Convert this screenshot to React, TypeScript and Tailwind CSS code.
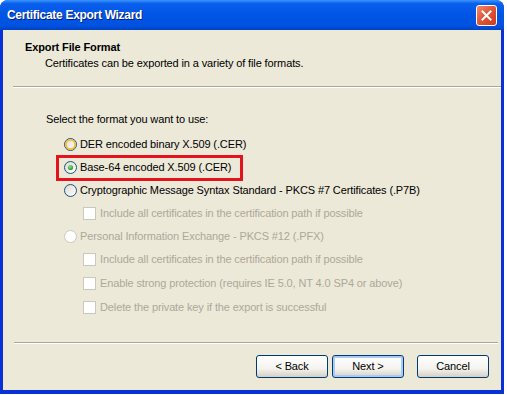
import React from "react";

const font = "font-['Tahoma','Liberation_Sans',sans-serif]";

const Radio: React.FC<{ checked?: boolean; hover?: boolean; disabled?: boolean }> = ({
  checked,
  hover,
  disabled,
}) => {
  const ring = disabled ? "#CAC8BB" : "#1C5180";
  return (
    <svg width="13" height="13" viewBox="0 0 13 13" className="shrink-0">
      <defs>
        <linearGradient id="rf" x1="0" y1="0" x2="1" y2="1">
          <stop offset="0" stopColor="#DCD9CF" />
          <stop offset="1" stopColor="#FFFFFF" />
        </linearGradient>
        <radialGradient id="dot" cx="0.4" cy="0.35" r="0.7">
          <stop offset="0" stopColor="#8EE08E" />
          <stop offset="1" stopColor="#1E9A1E" />
        </radialGradient>
      </defs>
      <circle cx="6.5" cy="6.5" r="6" fill={disabled ? "#FFFFFF" : "url(#rf)"} stroke={ring} strokeWidth="1" />
      {hover && <circle cx="6.5" cy="6.5" r="4.6" fill="none" stroke="#F9B934" strokeWidth="1.8" />}
      {checked && <circle cx="6.5" cy="6.5" r="2.6" fill="url(#dot)" />}
    </svg>
  );
};

const Check: React.FC = () => (
  <div className="w-[13px] h-[13px] shrink-0 border border-[#CAC8BB] bg-white" />
);

const RadioRow: React.FC<{ label: string; checked?: boolean; hover?: boolean; disabled?: boolean }> = ({
  label,
  checked,
  hover,
  disabled,
}) => (
  <div className="flex items-center h-[23px] gap-[3px] pl-[61px]">
    <Radio checked={checked} hover={hover} disabled={disabled} />
    <span className={disabled ? "text-[#ACA899]" : "text-black"}>{label}</span>
  </div>
);

const CheckRow: React.FC<{ label: string }> = ({ label }) => (
  <div className="flex items-center h-[23px] gap-[4px] pl-[80px]">
    <Check />
    <span className="text-[#ACA899]">{label}</span>
  </div>
);

const XPButton: React.FC<{ label: string; focused?: boolean }> = ({ label, focused }) => (
  <button
    className={`w-[72px] h-[23px] rounded-[3px] border border-[#003C74] bg-[linear-gradient(180deg,#FFFFFF_0%,#F4F3EE_60%,#D6D0C5_100%)] text-black ${
      focused ? "shadow-[inset_0_0_0_2px_#A8CAF5]" : ""
    }`}
  >
    {label}
  </button>
);

export default function App() {
  return (
    <div className={`w-[507px] h-[395px] bg-white ${font} text-[11px] leading-[13px] tracking-[-0.12px]`}>
      <div className="w-[504px] h-[394px] flex flex-col rounded-t-[8px] bg-[#0831D9] overflow-hidden">
        <div className="h-[30px] flex items-center justify-between pl-[7px] pr-[7px] bg-[linear-gradient(180deg,#3D95FF_0%,#0A5FEC_12%,#0055E5_50%,#0152E0_85%,#0043C2_100%)]">
          <span className="text-white font-bold text-[12px] tracking-[-0.3px] [text-shadow:1px_1px_0_#0A1E7A]">
            Certificate Export Wizard
          </span>
          <div className="w-[21px] h-[21px] rounded-[3px] border border-white bg-[linear-gradient(135deg,#F08A6C_0%,#E2583A_45%,#C83A1E_100%)] flex items-center justify-center">
            <svg width="11" height="11" viewBox="0 0 11 11">
              <path d="M1.5 1.5 L9.5 9.5 M9.5 1.5 L1.5 9.5" stroke="#FFFFFF" strokeWidth="2" strokeLinecap="square" />
            </svg>
          </div>
        </div>
        <div className="flex-1 mx-[3px] mb-[4px] bg-[#ECE9D8] flex flex-col">
          <div className="pt-[11px] pl-[22px] h-[56px]">
            <div className="font-bold">Export File Format</div>
            <div className="pl-[20px] pt-[3px]">Certificates can be exported in a variety of file formats.</div>
          </div>
          <div className="h-[2px] border-t border-[#ACA899] border-b border-b-white ml-[10px]" />
          <div className="pl-[43px] pt-[25px] pb-[7px]">Select the format you want to use:</div>
          <RadioRow label="DER encoded binary X.509 (.CER)" hover />
          <div className="relative">
            <RadioRow label="Base-64 encoded X.509 (.CER)" checked />
            <div className="absolute left-[53px] top-[-1px] w-[187px] h-[26px] border-[3px] border-[#E3141C]" />
          </div>
          <RadioRow label="Cryptographic Message Syntax Standard - PKCS #7 Certificates (.P7B)" />
          <CheckRow label="Include all certificates in the certification path if possible" />
          <RadioRow label="Personal Information Exchange - PKCS #12 (.PFX)" disabled />
          <CheckRow label="Include all certificates in the certification path if possible" />
          <div className="h-[1px]" />
          <CheckRow label="Enable strong protection (requires IE 5.0, NT 4.0 SP4 or above)" />
          <div className="h-[1px]" />
          <CheckRow label="Delete the private key if the export is successful" />
          <div className="flex-1" />
          <div className="h-[2px] border-t border-[#ACA899] border-b border-b-white ml-[11px] mr-[3px]" />
          <div className="flex items-center h-[46px] pl-[253px] pb-[2px]">
            <div className="flex gap-[4px]">
              <XPButton label="< Back" />
              <XPButton label="Next >" focused />
            </div>
            <div className="ml-[13px]">
              <XPButton label="Cancel" />
            </div>
          </div>
        </div>
      </div>
    </div>
  );
}
